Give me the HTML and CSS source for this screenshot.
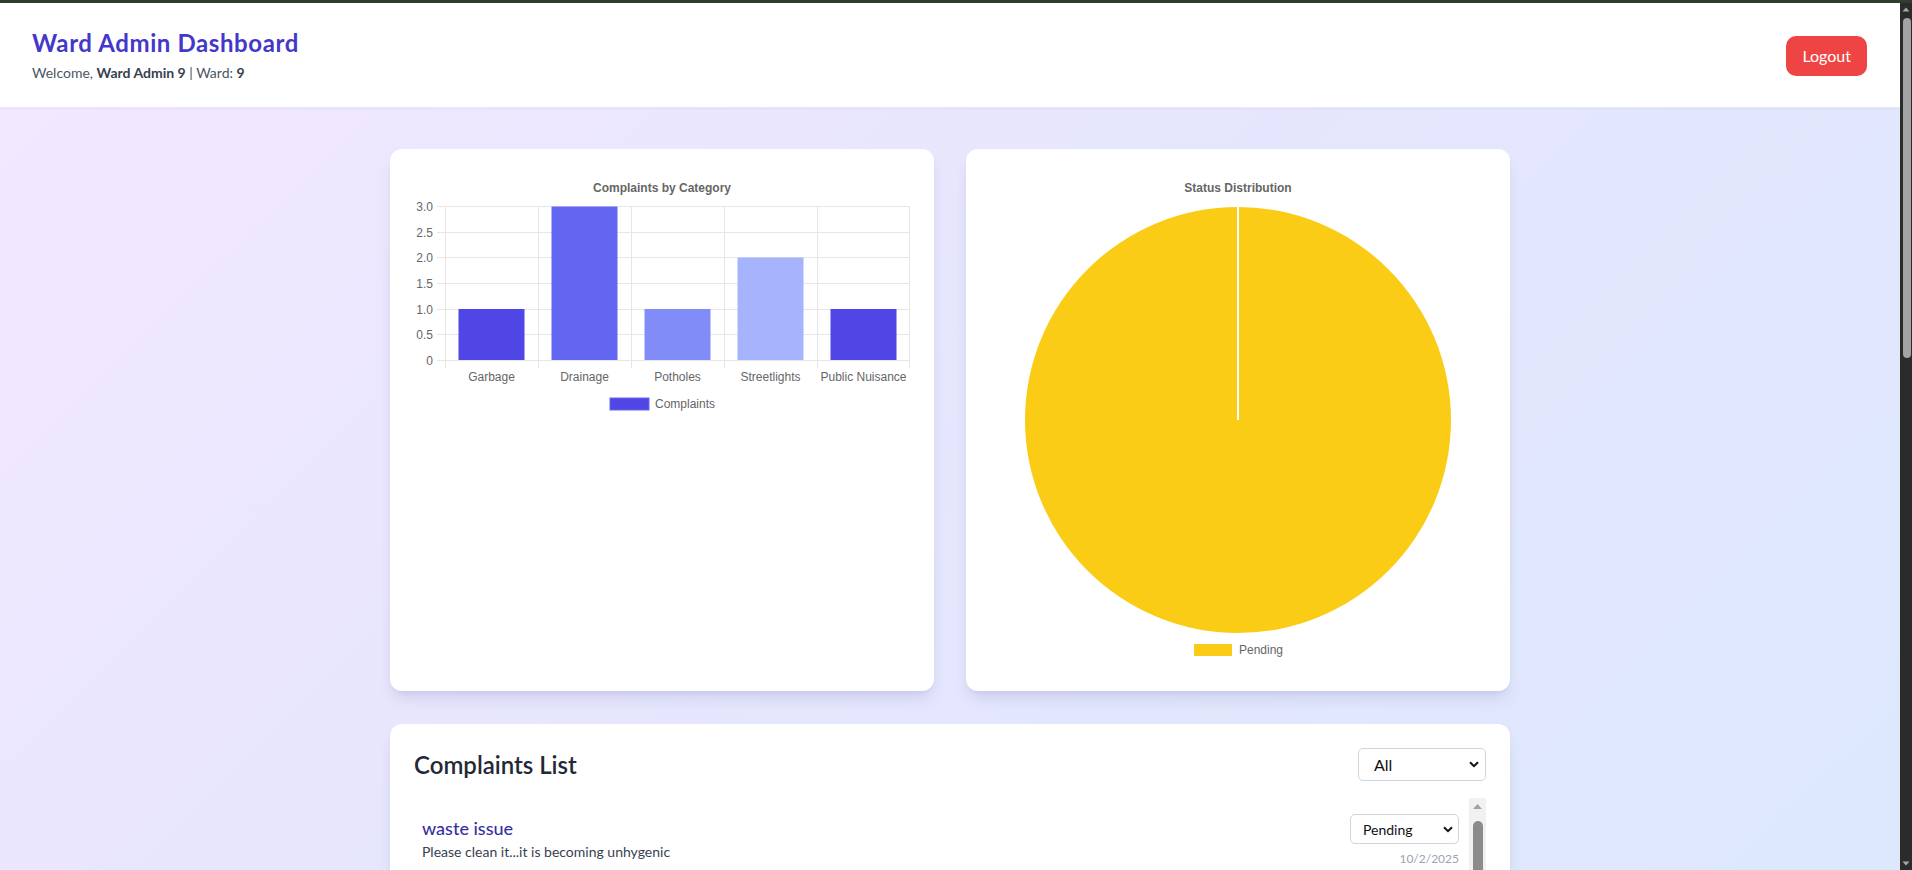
FILE: index.html
```html
<!DOCTYPE html>
<html lang="en">
<head>
<meta charset="utf-8">
<title>Ward Admin Dashboard</title>
<link rel="stylesheet" href="styles.css">
</head>
<body>
<div class="topstrip"></div>
<div class="window">
  <div class="app">
    <header class="header">
      <div class="brand">
        <h1 class="title">Ward Admin Dashboard</h1>
        <p class="welcome">Welcome, <strong>Ward Admin 9</strong> | Ward: <strong>9</strong></p>
      </div>
      <button class="logout" type="button">Logout</button>
    </header>
    <main class="main">
      <div class="container">
        <div class="charts">
          <section class="card chart-card">
            <svg class="chart" width="496" height="248" viewBox="0 0 496 248">
              <text class="ctitle" x="248" y="19" text-anchor="middle">Complaints by Category</text>
              <g class="grid">
                <line x1="23" y1="33.5" x2="496" y2="33.5"/>
                <line x1="23" y1="59.5" x2="496" y2="59.5"/>
                <line x1="23" y1="84.5" x2="496" y2="84.5"/>
                <line x1="23" y1="110.5" x2="496" y2="110.5"/>
                <line x1="23" y1="136.5" x2="496" y2="136.5"/>
                <line x1="23" y1="161.5" x2="496" y2="161.5"/>
                <line x1="23" y1="187.5" x2="496" y2="187.5"/>
                <line x1="31.5" y1="33" x2="31.5" y2="195"/>
                <line x1="124.5" y1="33" x2="124.5" y2="195"/>
                <line x1="217.5" y1="33" x2="217.5" y2="195"/>
                <line x1="310.5" y1="33" x2="310.5" y2="195"/>
                <line x1="403.5" y1="33" x2="403.5" y2="195"/>
                <line x1="495.5" y1="33" x2="495.5" y2="195"/>
              </g>
              <g class="tick" text-anchor="end">
                <text x="19" y="37.5">3.0</text>
                <text x="19" y="63.5">2.5</text>
                <text x="19" y="88.5">2.0</text>
                <text x="19" y="114.5">1.5</text>
                <text x="19" y="140.5">1.0</text>
                <text x="19" y="165.5">0.5</text>
                <text x="19" y="191.5">0</text>
              </g>
              <rect x="44.5" y="136" width="66" height="51" fill="#4f46e5"/>
              <rect x="137.5" y="33.5" width="66" height="153.5" fill="#6366f1"/>
              <rect x="230.5" y="136" width="66" height="51" fill="#818cf8"/>
              <rect x="323.5" y="84.5" width="66" height="102.5" fill="#a5b4fc"/>
              <rect x="416.5" y="136" width="66" height="51" fill="#4f46e5"/>
              <g class="tick" text-anchor="middle">
                <text x="77.5" y="208">Garbage</text>
                <text x="170.5" y="208">Drainage</text>
                <text x="263.5" y="208">Potholes</text>
                <text x="356.5" y="208">Streetlights</text>
                <text x="449.5" y="208">Public Nuisance</text>
              </g>
              <rect x="196" y="225" width="39" height="12" fill="#4f46e5" stroke="#6b66f0" stroke-width="1"/>
              <text class="tick" x="241" y="235">Complaints</text>
            </svg>
          </section>
          <section class="card chart-card">
            <svg class="chart" width="496" height="494" viewBox="0 0 496 494">
              <text class="ctitle" x="248" y="19" text-anchor="middle">Status Distribution</text>
              <circle cx="248" cy="247" r="213" fill="#facc15"/>
              <line x1="248" y1="34" x2="248" y2="247" stroke="#ffffff" stroke-width="2"/>
              <rect x="204" y="471" width="38" height="12" fill="#facc15"/>
              <text class="tick" x="249" y="481">Pending</text>
            </svg>
          </section>
        </div>
        <section class="card list-card">
          <div class="list-head">
            <h2 class="list-title">Complaints List</h2>
            <div class="select-wrap select-filter">
              <select class="select" aria-label="Filter">
                <option>All</option>
                <option>Pending</option>
                <option>In Progress</option>
                <option>Resolved</option>
              </select>
              <svg class="chev" width="10" height="7" viewBox="0 0 10 7"><path d="M1 1.2 L5 5.2 L9 1.2" fill="none" stroke="#111" stroke-width="2"/></svg>
            </div>
          </div>
          <div class="list-body">
            <ul class="items">
              <li class="item">
                <div class="item-main">
                  <h3 class="item-title">waste issue</h3>
                  <p class="item-desc">Please clean it...it is becoming unhygenic</p>
                </div>
                <div class="item-side">
                  <div class="select-wrap select-status">
                    <select class="select" aria-label="Status">
                      <option>Pending</option>
                      <option>In Progress</option>
                      <option>Resolved</option>
                    </select>
                    <svg class="chev" width="10" height="7" viewBox="0 0 10 7"><path d="M1 1.2 L5 5.2 L9 1.2" fill="none" stroke="#111" stroke-width="2"/></svg>
                  </div>
                  <span class="date">10/2/2025</span>
                </div>
              </li>
            </ul>
            <div class="list-scroll">
              <svg class="arrow" width="17" height="14" viewBox="0 0 17 14"><path d="M4 10 L8.5 5 L13 10 Z" fill="#a3a3a3"/></svg>
              <div class="list-thumb"></div>
            </div>
          </div>
        </section>
      </div>
    </main>
  </div>
  <div class="page-scroll">
    <svg class="arrow" width="12" height="12" viewBox="0 0 12 12"><path d="M2.5 8.5 L6 4.5 L9.5 8.5 Z" fill="#a8a8a8"/></svg>
    <div class="page-thumb"></div>
    <div class="page-track"></div>
    <svg class="arrow" width="12" height="12" viewBox="0 0 12 12"><path d="M2.5 3.5 L6 7.5 L9.5 3.5 Z" fill="#a8a8a8"/></svg>
  </div>
</div>
</body>
</html>
```

FILE: styles.css
```css
html, body {
  margin: 0;
  padding: 0;
  height: 870px;
  overflow: hidden;
}

body {
  display: flex;
  flex-direction: column;
  font-family: Lato, "Noto Sans", "Open Sans", sans-serif;
  color: #1f2937;
}

.topstrip {
  height: 3px;
  background: #303c2e;
  flex: none;
}

.window {
  flex: 1;
  display: flex;
  min-height: 0;
}

.app {
  flex: 1;
  min-width: 0;
  overflow: hidden;
  display: flex;
  flex-direction: column;
  background: linear-gradient(135deg, #f3e8ff 0%, #e6e6fd 45%, #dde8fc 100%);
}

/* Header */
.header {
  display: flex;
  justify-content: space-between;
  align-items: center;
  padding: 24px 32px 24px 32px;
  background: #ffffff;
  border-bottom: 1px solid #ece6fb;
  box-shadow: 0 1px 2px rgba(80, 60, 160, 0.05);
  flex: none;
}

.title {
  margin: 0;
  font-size: 24px;
  line-height: 32px;
  font-weight: 700;
  letter-spacing: 0.6px;
  color: #4338ca;
}

.welcome {
  margin: 4px 0 0;
  font-size: 14px;
  line-height: 20px;
  color: #4b5563;
}

.welcome strong {
  font-weight: 700;
  color: #374151;
}

.logout {
  font-family: inherit;
  font-size: 16px;
  line-height: 24px;
  color: #ffffff;
  background: #ef4444;
  border: none;
  border-radius: 10px;
  padding: 8px 16px;
  margin-top: 2px;
  margin-right: 1px;
}

/* Main */
.main {
  flex: 1;
  padding-top: 41px;
}

.container {
  width: 1120px;
  margin: 0 auto;
  display: flex;
  flex-direction: column;
  gap: 33px;
}

.charts {
  display: grid;
  grid-template-columns: 1fr 1fr;
  gap: 32px;
}

.card {
  background: #ffffff;
  border-radius: 12px;
  box-shadow: 0 10px 15px -3px rgba(60, 60, 120, 0.12), 0 4px 6px -4px rgba(60, 60, 120, 0.12);
}

.chart-card {
  padding: 24px;
}

.chart {
  display: block;
}

.chart .grid line {
  stroke: #e6e6e6;
  stroke-width: 1;
}

.ctitle {
  font-family: "Liberation Sans", Arial, sans-serif;
  font-size: 12px;
  font-weight: 700;
  fill: #666666;
}

.tick {
  font-family: "Liberation Sans", Arial, sans-serif;
  font-size: 12px;
  fill: #666666;
}

/* Complaints list */
.list-card {
  padding: 24px;
  min-height: 300px;
}

.list-head {
  display: flex;
  justify-content: space-between;
  align-items: center;
}

.list-title {
  margin: 0;
  font-size: 24px;
  line-height: 32px;
  font-weight: 600;
  color: #1f2937;
}

.select-wrap {
  display: grid;
  align-items: center;
}

.select-wrap > * {
  grid-area: 1 / 1;
}

.select {
  appearance: none;
  -webkit-appearance: none;
  font-family: inherit;
  color: #111111;
  background: #ffffff;
  border: 1px solid #d1d5db;
  border-radius: 5px;
  margin: 0;
}

.chev {
  justify-self: end;
  pointer-events: none;
}

.select-filter .select {
  width: 128px;
  height: 33px;
  font-size: 16px;
  padding: 0 0 0 15px;
}

.select-filter .chev {
  margin-right: 7px;
}

.select-status .select {
  width: 109px;
  height: 30px;
  font-size: 14px;
  padding: 0 0 0 12px;
}

.select-status .chev {
  margin-right: 6px;
}

.list-body {
  display: flex;
  margin-top: 17px;
  height: 320px;
}

.items {
  list-style: none;
  margin: 0;
  padding: 0;
  flex: 1;
}

.item {
  display: flex;
  justify-content: space-between;
  padding: 16px 10px 12px 8px;
}

.item-title {
  margin: 0;
  font-size: 18px;
  line-height: 28px;
  font-weight: 500;
  color: #3730a3;
}

.item-desc {
  margin: 0;
  font-size: 14px;
  line-height: 20px;
  color: #374151;
}

.item-side {
  display: flex;
  flex-direction: column;
  align-items: flex-end;
}

.date {
  margin-top: 7px;
  font-size: 12px;
  line-height: 16px;
  color: #9ca3af;
}

.list-scroll {
  width: 17px;
  background: #f1f1f1;
  display: flex;
  flex-direction: column;
  align-items: center;
}

.list-scroll .arrow {
  display: block;
  margin-top: 1px;
}

.list-thumb {
  width: 10px;
  height: 200px;
  margin-top: 8px;
  border-radius: 5px;
  background: #8b8b8b;
}

/* Page scrollbar */
.page-scroll {
  width: 12px;
  flex: none;
  background: #2b2b2b;
  display: flex;
  flex-direction: column;
  align-items: center;
}

.page-scroll .arrow {
  display: block;
  flex: none;
}

.page-thumb {
  width: 8px;
  height: 340px;
  margin-top: 3px;
  margin-left: 1px;
  border-radius: 4px;
  background: #a3a3a3;
  flex: none;
}

.page-track {
  flex: 1;
}
```
